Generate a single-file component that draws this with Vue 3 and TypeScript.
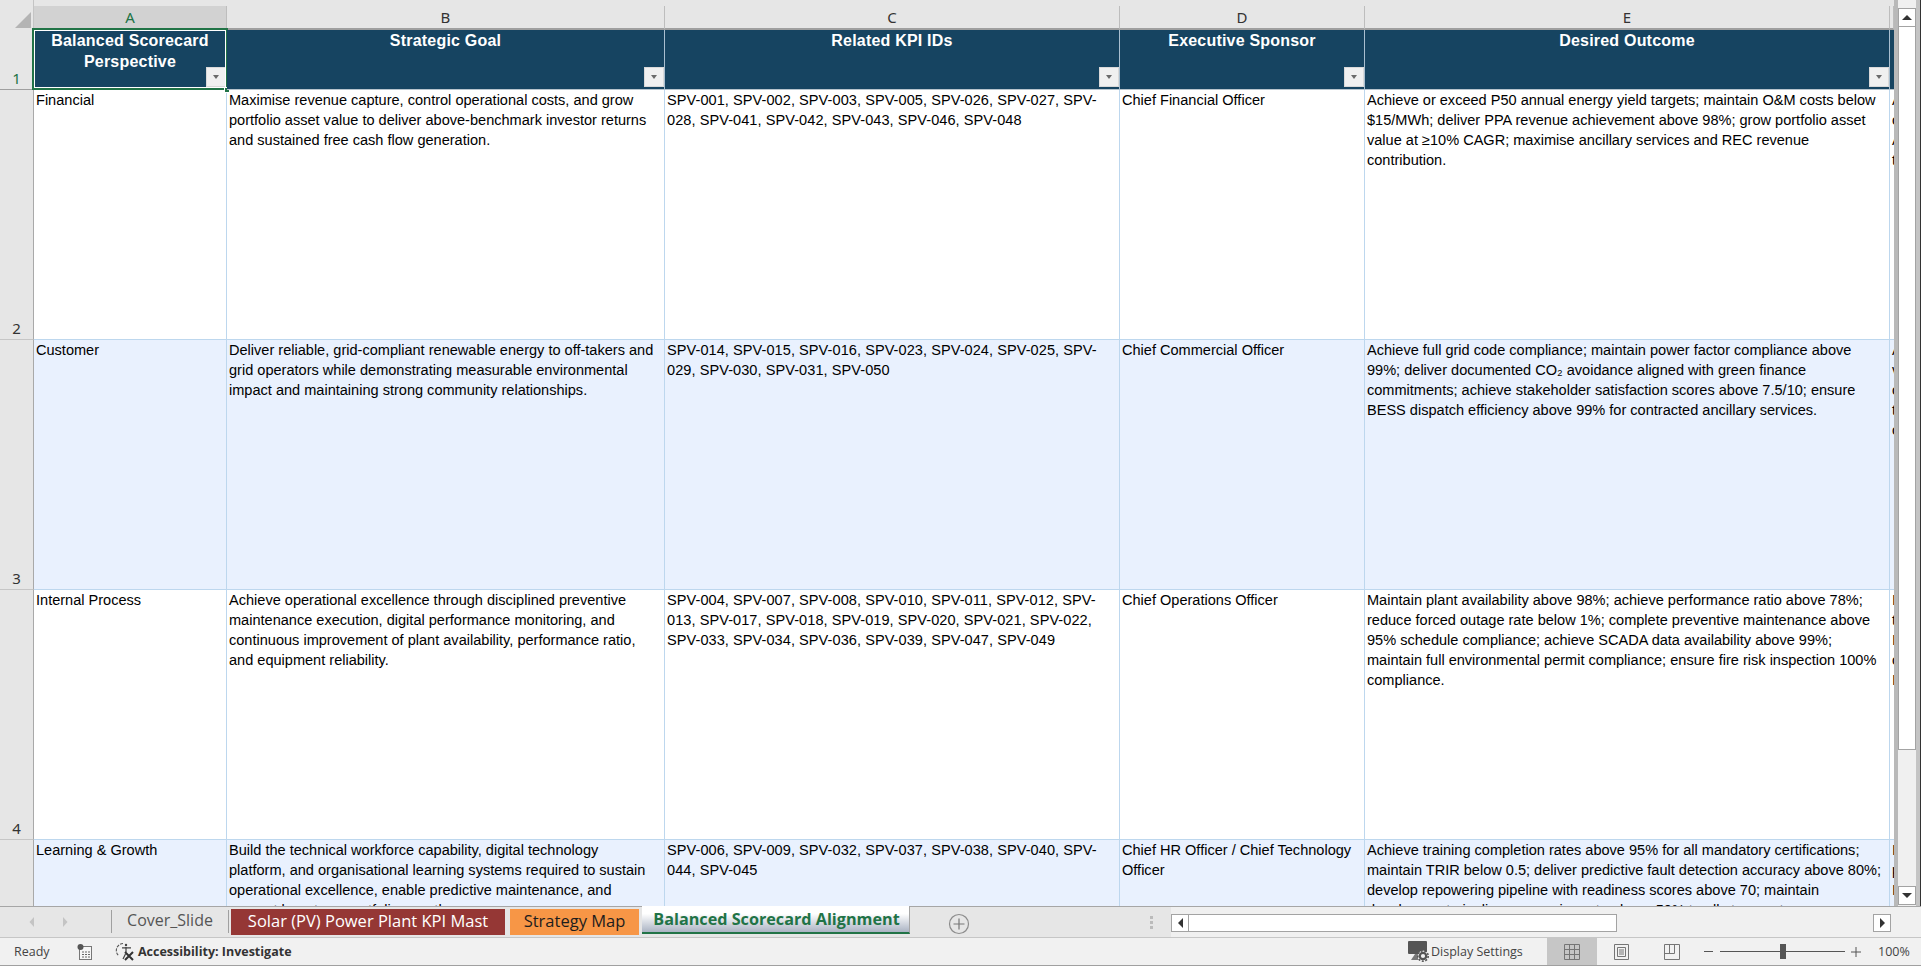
<script setup lang="ts">
interface SheetRow {
  num: number;
  perspective: string;
  goal: string;
  kpis: string;
  sponsor: string;
  outcome: string;
  next: string[];
}

const columns = ["A", "B", "C", "D", "E", ""];

const headers = [
  "Balanced Scorecard Perspective",
  "Strategic Goal",
  "Related KPI IDs",
  "Executive Sponsor",
  "Desired Outcome",
];

const rows: SheetRow[] = [
  {
    num: 2,
    perspective: "Financial",
    goal: "Maximise revenue capture, control operational costs, and grow portfolio asset value to deliver above-benchmark investor returns and sustained free cash flow generation.",
    kpis: "SPV-001, SPV-002, SPV-003, SPV-005, SPV-026, SPV-027, SPV-028, SPV-041, SPV-042, SPV-043, SPV-046, SPV-048",
    sponsor: "Chief Financial Officer",
    outcome: "Achieve or exceed P50 annual energy yield targets; maintain O&M costs below $15/MWh; deliver PPA revenue achievement above 98%; grow portfolio asset value at ≥10% CAGR; maximise ancillary services and REC revenue contribution.",
    next: ["A", "c", "A", "t"],
  },
  {
    num: 3,
    perspective: "Customer",
    goal: "Deliver reliable, grid-compliant renewable energy to off-takers and grid operators while demonstrating measurable environmental impact and maintaining strong community relationships.",
    kpis: "SPV-014, SPV-015, SPV-016, SPV-023, SPV-024, SPV-025, SPV-029, SPV-030, SPV-031, SPV-050",
    sponsor: "Chief Commercial Officer",
    outcome: "Achieve full grid code compliance; maintain power factor compliance above 99%; deliver documented CO₂ avoidance aligned with green finance commitments; achieve stakeholder satisfaction scores above 7.5/10; ensure BESS dispatch efficiency above 99% for contracted ancillary services.",
    next: ["A", "v", "c", "t", "c"],
  },
  {
    num: 4,
    perspective: "Internal Process",
    goal: "Achieve operational excellence through disciplined preventive maintenance execution, digital performance monitoring, and continuous improvement of plant availability, performance ratio, and equipment reliability.",
    kpis: "SPV-004, SPV-007, SPV-008, SPV-010, SPV-011, SPV-012, SPV-013, SPV-017, SPV-018, SPV-019, SPV-020, SPV-021, SPV-022, SPV-033, SPV-034, SPV-036, SPV-039, SPV-047, SPV-049",
    sponsor: "Chief Operations Officer",
    outcome: "Maintain plant availability above 98%; achieve performance ratio above 78%; reduce forced outage rate below 1%; complete preventive maintenance above 95% schedule compliance; achieve SCADA data availability above 99%; maintain full environmental permit compliance; ensure fire risk inspection 100% compliance.",
    next: ["I", "t", "I", "c", "I"],
  },
  {
    num: 5,
    perspective: "Learning & Growth",
    goal: "Build the technical workforce capability, digital technology platform, and organisational learning systems required to sustain operational excellence, enable predictive maintenance, and support long-term portfolio growth.",
    kpis: "SPV-006, SPV-009, SPV-032, SPV-037, SPV-038, SPV-040, SPV-044, SPV-045",
    sponsor: "Chief HR Officer / Chief Technology Officer",
    outcome: "Achieve training completion rates above 95% for all mandatory certifications; maintain TRIR below 0.5; deliver predictive fault detection accuracy above 80%; develop repowering pipeline with readiness scores above 70; maintain development pipeline conversion rate above 50% to all stage gates.",
    next: ["I", "p", "I"],
  },
];
</script>

<template>
  <div class="app">
    <div class="sheet">
      <div class="grid">
        <div class="corner"><span class="corner-tri"></span></div>
        <div
          v-for="(col, i) in columns"
          :key="'col' + i"
          class="col-head"
          :class="{ active: col === 'A' }"
        >
          {{ col }}
        </div>

        <div class="row-head first">1</div>
        <div
          v-for="(title, i) in headers"
          :key="title"
          class="head-cell"
        >
          <span class="head-text">{{ title }}</span>
          <span class="filter"><i></i></span>
          <template v-if="i === 0">
            <span class="selection"></span>
            <span class="handle"></span>
          </template>
        </div>
        <div class="head-cell"></div>

        <template v-for="row in rows" :key="row.num">
          <div class="row-head">{{ row.num }}</div>
          <div class="cell" :class="{ band: row.num % 2 }">{{ row.perspective }}</div>
          <div class="cell" :class="{ band: row.num % 2 }">{{ row.goal }}</div>
          <div class="cell kpi" :class="{ band: row.num % 2 }">{{ row.kpis }}</div>
          <div class="cell" :class="{ band: row.num % 2 }">{{ row.sponsor }}</div>
          <div class="cell" :class="{ band: row.num % 2 }">{{ row.outcome }}</div>
          <div class="cell clipped" :class="{ band: row.num % 2 }">
            <div v-for="(line, i) in row.next" :key="i">{{ line }}</div>
          </div>
        </template>
      </div>

      <div class="vscroll">
        <button class="sb-btn up"><i></i></button>
        <div class="v-thumb"></div>
        <div class="v-track"></div>
        <button class="sb-btn down"><i></i></button>
      </div>
    </div>

    <div class="tabbar">
      <div class="tab-nav">
        <svg width="8" height="12" viewBox="0 0 8 12"><path d="M6 1 1.5 6 6 11z" fill="#c4c4c4" /></svg>
        <svg width="8" height="12" viewBox="0 0 8 12"><path d="M2 1 6.5 6 2 11z" fill="#c4c4c4" /></svg>
      </div>
      <div class="tab plain">Cover_Slide</div>
      <div class="tab red">Solar (PV) Power Plant KPI Mast</div>
      <div class="tab orange">Strategy Map</div>
      <div class="tab current">Balanced Scorecard Alignment</div>
      <svg class="add" width="22" height="22" viewBox="0 0 22 22">
        <circle cx="11" cy="11" r="9.5" fill="none" stroke="#8c8c8c" stroke-width="1.2" />
        <path d="M11 5.5v11M5.5 11h11" stroke="#777" stroke-width="1.2" />
      </svg>
      <div class="tab-spacer"></div>
      <div class="dots"><i></i><i></i><i></i></div>
      <div class="hscroll">
        <button class="sb-btn left"><i></i></button>
        <div class="h-thumb"></div>
        <div class="h-track"></div>
        <button class="sb-btn right"><i></i></button>
      </div>
    </div>

    <div class="status">
      <span class="ready">Ready</span>
      <svg class="calc" width="16" height="16" viewBox="0 0 16 16">
        <rect x="2.5" y="2.5" width="12" height="13" fill="#f6f6f6" stroke="#777" />
        <rect x="0.5" y="0" width="6" height="6" rx="3" fill="#555" />
        <path d="M5 8h2M8 8h2M11 8h2M5 10.5h2M8 10.5h2M11 10.5h2M5 13h2M8 13h2M11 13h2" stroke="#666" />
      </svg>
      <svg class="access" width="20" height="19" viewBox="0 0 20 19">
        <path d="M8 1.5a7 7 0 0 0-4 12.5" fill="none" stroke="#555" stroke-width="1.1" stroke-dasharray="3 1.2" />
        <circle cx="11" cy="3" r="1.2" fill="#444" />
        <path d="M7 5.8h9M11 5v5M8 17l2.5-5" fill="none" stroke="#444" stroke-width="1.2" />
        <path d="M10 10 18 18M18 10l-8 8" stroke="#333" stroke-width="2" />
      </svg>
      <span class="access-text">Accessibility: Investigate</span>
      <div class="status-spacer"></div>
      <svg class="display" width="22" height="21" viewBox="0 0 22 21">
        <rect x="0" y="0" width="19" height="13" rx="1" fill="#555" />
        <path d="M3 19h7v-6H7z" fill="#777" />
        <circle cx="15" cy="15" r="5.4" fill="#f1f1f1" />
        <circle cx="15" cy="15" r="3.2" fill="none" stroke="#555" stroke-width="2.2" />
        <circle cx="15" cy="15" r="5.2" fill="none" stroke="#555" stroke-width="1.6" stroke-dasharray="2 1.6" />
      </svg>
      <span class="display-text">Display Settings</span>
      <div class="view active">
        <svg width="17" height="16" viewBox="0 0 17 16">
          <path d="M.5.5h15v15H.5zM5.5.5v15M10.5.5v15M.5 5.5h15M.5 10.5h15" fill="none" stroke="#757575" />
        </svg>
      </div>
      <div class="view">
        <svg width="16" height="16" viewBox="0 0 16 16">
          <path d="M.5.5h14v15H.5zM3.5 3.5h8v9h-8zM5 6h5M5 8h5M5 10h5" fill="none" stroke="#757575" />
        </svg>
      </div>
      <div class="view">
        <svg width="17" height="16" viewBox="0 0 17 16">
          <path d="M.5.5h15v15H.5zM.5 9.5h10M5.5.5v9M10.5.5v9" fill="none" stroke="#757575" />
        </svg>
      </div>
      <div class="zoom">
        <i class="minus"></i>
        <div class="slider"><span></span></div>
        <svg width="10" height="10" viewBox="0 0 10 10"><path d="M5 0v10M0 5h10" stroke="#555" /></svg>
        <span class="pct">100%</span>
      </div>
    </div>
  </div>
</template>

<style>
html,
body {
  margin: 0;
  overflow: hidden;
}
</style>

<style scoped>
.app {
  width: 1921px;
  height: 966px;
  display: flex;
  flex-direction: column;
  overflow: hidden;
  background: #e6e6e6;
}

.sheet {
  height: 906px;
  display: flex;
  flex: none;
  border-right: 1px solid #333;
}

.grid {
  width: 1894px;
  height: 906px;
  overflow: hidden;
  display: grid;
  grid-template-columns: 34px 193px 438px 455px 245px 525px 4px;
  grid-template-rows: 30px 60px 250px 250px 250px 250px;
  font-family: "Liberation Sans", Arial, sans-serif;
  font-size: 14.55px;
  color: #000;
}

.corner {
  background: #e6e6e6;
  position: relative;
  border-right: 1px solid #c4c4c4;
  box-sizing: border-box;
}

.corner-tri {
  position: absolute;
  right: 2px;
  bottom: 2px;
  border-style: solid;
  border-width: 0 0 16px 16px;
  border-color: transparent transparent #b4b4b4 transparent;
}

.col-head {
  margin-top: 6px;
  background: #e6e6e6;
  border-right: 1px solid #bdbdbd;
  border-bottom: 2px solid #9f9f9f;
  box-sizing: border-box;
  text-align: center;
  font-family: "Noto Sans", sans-serif;
  font-size: 15px;
  line-height: 23px;
  color: #333;
}

.col-head.active {
  background: #d2d2d2;
  color: #217346;
}

.row-head {
  background: #e6e6e6;
  border-right: 1px solid #a9a9a9;
  border-bottom: 1px solid #c6c6c6;
  box-sizing: border-box;
  display: flex;
  align-items: flex-end;
  justify-content: center;
  font-family: "Noto Sans", sans-serif;
  font-size: 15px;
  line-height: 22px;
  color: #333;
}

.row-head.first {
  color: #217346;
  border-bottom-color: #9f9f9f;
}

.head-cell {
  position: relative;
  background: #164461;
  border-right: 1px solid #a9bfd0;
  border-bottom: 1px solid #b7c4cd;
  box-sizing: border-box;
  padding: 0 3px;
  text-align: center;
  font-size: 16px;
  font-weight: 700;
  line-height: 21px;
  letter-spacing: 0.2px;
  color: #fff;
}

.head-cell:last-child {
  border-right: 0;
}

.filter {
  position: absolute;
  right: 0;
  bottom: 2px;
  width: 20px;
  height: 20px;
  box-sizing: border-box;
  background: #f0f0f0;
  border: 1px solid #d9d9d9;
  display: flex;
  align-items: center;
  justify-content: center;
}

.filter i {
  width: 0;
  height: 0;
  border-style: solid;
  border-width: 4px 3.5px 0;
  border-color: #6a6a6a transparent transparent;
}

.selection {
  position: absolute;
  inset: -2px -2px -1px -2px;
  border: 2px solid #217346;
  box-shadow: inset 0 0 0 1px #fff;
}

.handle {
  position: absolute;
  right: -4px;
  bottom: -4px;
  width: 4px;
  height: 4px;
  background: #217346;
  border: 1px solid #fff;
}

.cell {
  background: #fff;
  border-right: 1px solid #bdd7ee;
  border-bottom: 1px solid #bdd7ee;
  box-sizing: border-box;
  padding: 0 6px 0 2px;
  line-height: 20px;
  overflow: hidden;
}

.cell.kpi {
  letter-spacing: 0.06px;
}

.cell.band {
  background: #e9f1fe;
}

.clipped {
  border-right: 0;
  white-space: nowrap;
}

.vscroll {
  width: 26px;
  height: 906px;
  box-sizing: border-box;
  border-left: 4px solid #b9b9b9;
  border-right: 4px solid #c4c4c4;
  background: #f0f0f0;
  display: flex;
  flex-direction: column;
  padding-top: 8px;
}

.sb-btn {
  display: flex;
  align-items: center;
  justify-content: center;
  padding: 0;
  background: #fff;
  border: 1px solid #a3a3a3;
  box-sizing: border-box;
  flex: none;
}

.sb-btn.up,
.sb-btn.down {
  height: 19px;
}

.sb-btn.down {
  margin-bottom: 1px;
}

.sb-btn i {
  width: 0;
  height: 0;
  border-style: solid;
}

.sb-btn.up i {
  border-width: 0 5px 5px;
  border-color: transparent transparent #333;
}

.sb-btn.down i {
  border-width: 5px 5px 0;
  border-color: #333 transparent transparent;
}

.sb-btn.left i {
  border-width: 5px 5px 5px 0;
  border-color: transparent #333;
}

.sb-btn.right i {
  border-width: 5px 0 5px 5px;
  border-color: transparent #333;
}

.v-thumb {
  height: 723px;
  flex: none;
  background: #fff;
  border: 1px solid #a3a3a3;
  border-top: 0;
  box-sizing: border-box;
}

.v-track {
  flex: 1;
}

.tabbar {
  height: 32px;
  flex: none;
  display: flex;
  align-items: flex-start;
  box-sizing: border-box;
  border-top: 1px solid #a6a6a6;
  border-bottom: 1px solid #c6c6c6;
  font-family: "Open Sans", "Noto Sans", sans-serif;
  font-size: 16.5px;
}

.tab-nav {
  width: 112px;
  height: 23px;
  margin-top: 3px;
  box-sizing: border-box;
  padding-left: 28px;
  display: flex;
  gap: 25px;
  align-items: center;
  border-right: 1px solid #a0a0a0;
}

.tab {
  height: 26px;
  margin-top: 2px;
  line-height: 23px;
  text-align: center;
  box-sizing: border-box;
  white-space: nowrap;
}

.tab.plain {
  width: 117px;
  color: #555;
  border-right: 1px solid #a0a0a0;
  margin-top: 3px;
  height: 23px;
  line-height: 20px;
  font-size: 16px;
}

.tab.red {
  width: 274px;
  margin-left: 2px;
  background: #953735;
  color: #fff;
}

.tab.orange {
  width: 129px;
  margin-left: 5px;
  background: #f79646;
  color: #1d1d1d;
}

.tab.current {
  width: 268px;
  height: 28px;
  margin-left: 3px;
  margin-top: -1px;
  padding-left: 2px;
  line-height: 27px;
  font-size: 16.2px;
  font-weight: 700;
  color: #217346;
  background: linear-gradient(#fff, #fff 30%, #aab3c3);
  border-bottom: 2px solid #217346;
  border-right: 1px solid #a6a6a6;
}

.add {
  margin: 6px 0 0 38px;
}

.tab-spacer {
  flex: 1;
}

.dots {
  display: flex;
  flex-direction: column;
  gap: 2px;
  margin: 9px 18px 0 0;
}

.dots i {
  width: 3px;
  height: 3px;
  background: #bbb;
}

.hscroll {
  width: 750px;
  height: 30px;
  display: flex;
  align-items: flex-start;
  padding: 7px 30px 0 0;
  box-sizing: border-box;
  background: #f0f0f0;
}

.sb-btn.left,
.sb-btn.right {
  width: 18px;
  height: 18px;
}

.h-thumb {
  width: 428px;
  height: 18px;
  background: #fff;
  border: 1px solid #a3a3a3;
  border-left: 0;
  box-sizing: border-box;
}

.h-track {
  flex: 1;
}

.status {
  height: 28px;
  flex: none;
  background: #f1f1f1;
  border-bottom: 1px solid #a0a0a0;
  box-sizing: border-box;
  display: flex;
  align-items: center;
  font-family: "Open Sans", "Noto Sans", sans-serif;
  font-size: 12.5px;
  color: #444;
}

.ready {
  margin-left: 14px;
  width: 63px;
}

.calc {
  width: 16px;
  margin-right: 22px;
}

.access {
  margin-right: 3px;
}

.access-text {
  font-weight: 700;
  color: #333;
}

.status-spacer {
  flex: 1;
}

.display {
  margin-right: 1px;
}

.display-text {
  width: 116px;
}

.view {
  width: 50px;
  height: 27px;
  display: flex;
  align-items: center;
  justify-content: center;
}

.view.active {
  background: #c6c6c6;
}

.zoom {
  width: 224px;
  display: flex;
  align-items: center;
  box-sizing: border-box;
  padding-left: 7px;
}

.minus {
  width: 9px;
  height: 1px;
  background: #555;
}

.slider {
  position: relative;
  width: 125px;
  height: 1px;
  margin: 0 6px 0 7px;
  background: #555;
}

.slider span {
  position: absolute;
  left: 60px;
  top: -7px;
  width: 6px;
  height: 15px;
  background: #555;
}

.pct {
  margin-left: 17px;
}
</style>
